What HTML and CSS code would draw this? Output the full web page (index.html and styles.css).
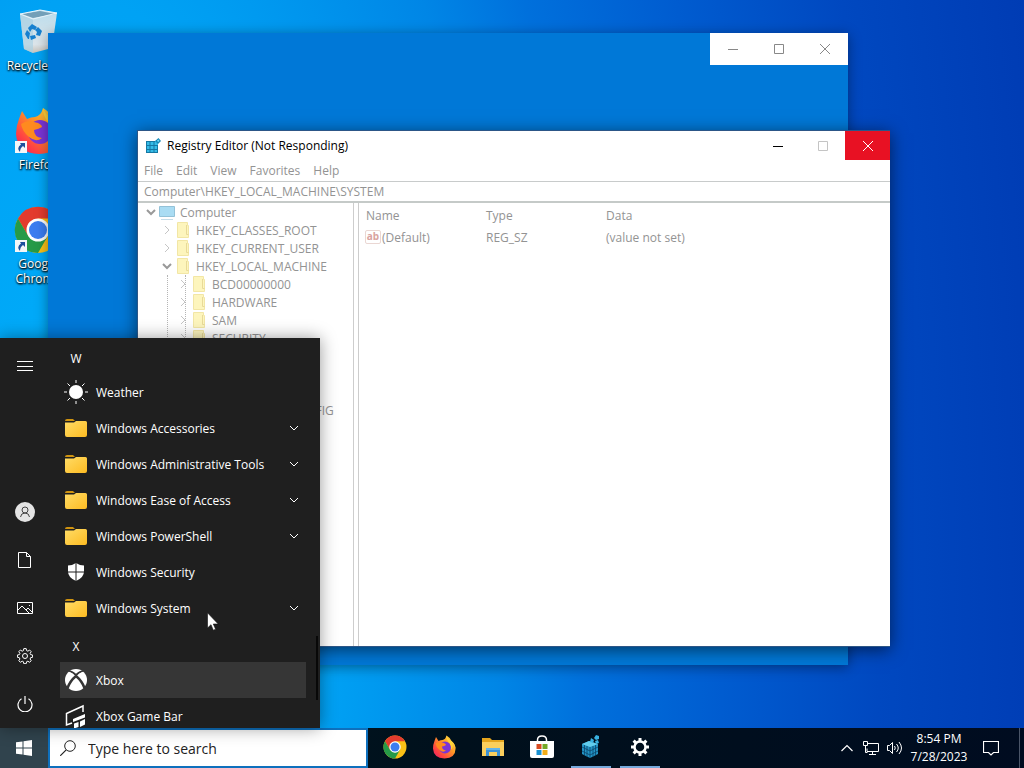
FILE: index.html
```html
<!DOCTYPE html>
<html lang="en">
<head>
    <meta charset="UTF-8">
    <meta name="viewport" content="width=device-width, initial-scale=1.0">
    <title>Desktop</title>
    <link rel="stylesheet" href="styles.css">
</head>
<body>
    <!-- shared icons -->
    <svg class="defs" width="0" height="0" aria-hidden="true">
        <defs>
            <linearGradient id="folder-fill" x1="0" y1="0" x2="1" y2="1">
                <stop offset="0" stop-color="#ffdc66"/>
                <stop offset="1" stop-color="#fdbb22"/>
            </linearGradient>
            <linearGradient id="fox-fill" x1="1" y1="0" x2="0" y2="1">
                <stop offset="0" stop-color="#fff04a"/>
                <stop offset=".4" stop-color="#ff9a25"/>
                <stop offset=".75" stop-color="#ff4143"/>
                <stop offset="1" stop-color="#e5156f"/>
            </linearGradient>
            <linearGradient id="bin-fill" x1="0" y1="0" x2="0" y2="1">
                <stop offset="0" stop-color="#b9dcec"/>
                <stop offset=".8" stop-color="#dde5ea"/>
                <stop offset="1" stop-color="#c8c1b8"/>
            </linearGradient>
            <symbol id="folder" viewBox="0 0 24 24">
                <path d="M1 5q0-2 2-2h6l2 2h-10z" fill="#cf9310"/>
                <path d="M1 6.500l9 0 2-1.500h9.500q1.500 0 1.500 1.500v12.500q0 2-2 2h-18q-2 0-2-2z" fill="url(#folder-fill)"/>
            </symbol>
            <symbol id="chevron" viewBox="0 0 10 10">
                <path d="M1 3l4 4 4-4" fill="none" stroke="currentColor"/>
            </symbol>
            <symbol id="tree-folder" viewBox="0 0 16 18">
                <path d="M2.500 1.500h10v3h1v12h-11z" fill="#fdf5bd" stroke="#f2e6a5"/>
                <path d="M11.500 4v9.500h2" fill="none" stroke="#e8da98"/>
            </symbol>
            <symbol id="minimize" viewBox="0 0 12 12">
                <path d="M1 6.500h10" fill="none" stroke="currentColor"/>
            </symbol>
            <symbol id="maximize" viewBox="0 0 12 12">
                <path d="M1.500 1.500h9v9h-9z" fill="none" stroke="currentColor"/>
            </symbol>
            <symbol id="close" viewBox="0 0 12 12">
                <path d="M1 1l10 10M11 1l-10 10" fill="none" stroke="currentColor"/>
            </symbol>
            <symbol id="chrome" viewBox="0 0 48 48">
                <circle cx="24" cy="24" r="23" fill="#fbc116"/>
                <path d="M4 12.500a23 23 0 0 1 40 0h-20l-10 17z" fill="#e33b2e"/>
                <path d="M4 12.500a23 23 0 0 0 20 34.500l10-17.300-10 5.300-10-5.500z" fill="#269a48"/>
                <circle cx="24" cy="24" r="11.500" fill="#fff"/>
                <circle cx="24" cy="24" r="9" fill="#3b7df0"/>
            </symbol>
            <symbol id="firefox" viewBox="0 0 48 48">
                <path d="M5 12l3-8 5 8q4-2 8-2 6-1 8-9 7 4 10 11 8 6 8 16 0 18-22 19-22-1-23-20 0-8 3-15z" fill="url(#fox-fill)"/>
                <circle cx="26" cy="25" r="12" fill="#7a35d6"/>
                <path d="M7 17q7-5 13-2l4 1q4 2 4 4-3 2-8 3 0 7 8 8-6 5-13-1-7-6-8-13z" fill="#ff8a1f"/>
                <path d="M29 1q0 9 6 15 4 5 3 13 5-5 3-12 6 5 6 12 0-10-8-17-8-4-10-11z" fill="#ffd43a"/>
            </symbol>
            <symbol id="shortcut" viewBox="0 0 12 12">
                <path d="M0 0h12v12h-12z" fill="#f4f6f8"/>
                <path d="M5 2h5v5l-2-2q-3 2-3 6-4-4 1-7.500z" fill="#1d4f9c"/>
            </symbol>
            <symbol id="registry" viewBox="0 0 16 16">
                <path d="M1 3h12v12h-12z" fill="#35bce8"/>
                <path d="M1.500 15v-12M5 3v12M9 3v12M12.500 7v8M1 3.500h9M1 7.500h12M1 11.500h12M1 14.500h12" fill="none" stroke="#1478a4"/>
                <path d="M10 3l3.500-3 2.500 3-3 3z" fill="#1689b8"/>
                <path d="M12 2.500l1.500-1 1 1.500-1.500 1z" fill="#73dcfa"/>
            </symbol>
        </defs>
    </svg>

    <main class="desktop">
        <div class="workspace">
            <nav class="shortcuts" aria-label="Desktop shortcuts">
                <a class="shortcut" href="#">
                    <svg class="shortcut-icon" viewBox="0 0 48 48">
                        <path d="M6 6l20-4 17 3-5 35-19 5-9-4z" fill="url(#bin-fill)"/>
                        <path d="M6 6l13 5v34l-9-4z" fill="#a9cfe2" opacity=".65"/>
                        <path d="M8 6l18-3 15 3-22 4z" fill="#739fb8"/>
                        <path d="M6 6l20-4 17 3-24 6z" fill="none" stroke="#e6f3fa"/>
                        <path d="M14 20l4-4 5 3-2 3-3-1-2 3zM24 19l4 4-2 5-4-1 1-3-2-2zM22 30l-5 2-1-4 5-1zM14 31l-3-5 2-4 3 3-1 6z" fill="#1680cf"/>
                    </svg>
                    <span>Recycle Bin</span>
                </a>
                <a class="shortcut" href="#">
                    <svg class="shortcut-icon" viewBox="0 0 48 48">
                        <use href="#firefox" width="48" height="48"/>
                        <use href="#shortcut" x="1" y="34" width="12" height="12"/>
                    </svg>
                    <span>Firefox</span>
                </a>
                <a class="shortcut" href="#">
                    <svg class="shortcut-icon" viewBox="0 0 48 48">
                        <use href="#chrome" width="48" height="48"/>
                        <use href="#shortcut" x="1" y="34" width="12" height="12"/>
                    </svg>
                    <span>Google Chrome</span>
                </a>
            </nav>

            <section class="window settings-window" aria-label="Settings">
                <div class="settings-controls">
                    <button type="button" aria-label="Minimize"><svg class="glyph"><use href="#minimize"/></svg></button>
                    <button type="button" aria-label="Maximize"><svg class="glyph"><use href="#maximize"/></svg></button>
                    <button type="button" aria-label="Close"><svg class="glyph"><use href="#close"/></svg></button>
                </div>
            </section>

            <section class="window registry-window" aria-label="Registry Editor">
                <header class="titlebar">
                    <svg class="icon-16"><use href="#registry"/></svg>
                    <h1>Registry Editor (Not Responding)</h1>
                    <div class="window-controls">
                        <button type="button" class="minimize" aria-label="Minimize"><svg class="glyph"><use href="#minimize"/></svg></button>
                        <button type="button" class="maximize" aria-label="Maximize"><svg class="glyph"><use href="#maximize"/></svg></button>
                        <button type="button" class="close" aria-label="Close"><svg class="glyph"><use href="#close"/></svg></button>
                    </div>
                </header>
                <div class="menubar">
                    <button type="button">File</button>
                    <button type="button">Edit</button>
                    <button type="button">View</button>
                    <button type="button">Favorites</button>
                    <button type="button">Help</button>
                </div>
                <input class="address" type="text" aria-label="Address" value="Computer\HKEY_LOCAL_MACHINE\SYSTEM">
                <div class="panes">
                    <div class="tree">
                        <div class="node">
                            <svg class="arrow open"><use href="#chevron"/></svg>
                            <svg class="icon-16" viewBox="0 0 16 16">
                                <path d="M.5 2.500h15v10h-15z" fill="#a9dcf3" stroke="#93c2d8"/>
                                <path d="M2 15.500h12" stroke="#c4dce8"/>
                            </svg>
                            <span>Computer</span>
                        </div>
                        <ul>
                            <li><div class="node"><svg class="arrow"><use href="#chevron"/></svg><svg class="tree-folder"><use href="#tree-folder"/></svg><span>HKEY_CLASSES_ROOT</span></div></li>
                            <li><div class="node"><svg class="arrow"><use href="#chevron"/></svg><svg class="tree-folder"><use href="#tree-folder"/></svg><span>HKEY_CURRENT_USER</span></div></li>
                            <li>
                                <div class="node"><svg class="arrow open"><use href="#chevron"/></svg><svg class="tree-folder"><use href="#tree-folder"/></svg><span>HKEY_LOCAL_MACHINE</span></div>
                                <ul class="keys">
                                    <li><div class="node"><svg class="arrow"><use href="#chevron"/></svg><svg class="tree-folder"><use href="#tree-folder"/></svg><span>BCD00000000</span></div></li>
                                    <li><div class="node"><svg class="arrow"><use href="#chevron"/></svg><svg class="tree-folder"><use href="#tree-folder"/></svg><span>HARDWARE</span></div></li>
                                    <li><div class="node"><svg class="arrow"><use href="#chevron"/></svg><svg class="tree-folder"><use href="#tree-folder"/></svg><span>SAM</span></div></li>
                                    <li><div class="node"><svg class="arrow"><use href="#chevron"/></svg><svg class="tree-folder"><use href="#tree-folder"/></svg><span>SECURITY</span></div></li>
                                    <li><div class="node"><svg class="arrow"><use href="#chevron"/></svg><svg class="tree-folder"><use href="#tree-folder"/></svg><span>SOFTWARE</span></div></li>
                                    <li><div class="node"><svg class="arrow"><use href="#chevron"/></svg><svg class="tree-folder"><use href="#tree-folder"/></svg><span>SYSTEM</span></div></li>
                                </ul>
                            </li>
                            <li><div class="node"><svg class="arrow"><use href="#chevron"/></svg><svg class="tree-folder"><use href="#tree-folder"/></svg><span>HKEY_USERS</span></div></li>
                            <li><div class="node"><svg class="arrow"><use href="#chevron"/></svg><svg class="tree-folder"><use href="#tree-folder"/></svg><span>HKEY_CURRENT_CONFIG</span></div></li>
                        </ul>
                    </div>
                    <div class="values">
                        <table>
                            <thead>
                                <tr><th>Name</th><th>Type</th><th>Data</th></tr>
                            </thead>
                            <tbody>
                                <tr>
                                    <td><div class="value-name"><span class="string-icon">ab</span>(Default)</div></td>
                                    <td>REG_SZ</td>
                                    <td>(value not set)</td>
                                </tr>
                            </tbody>
                        </table>
                    </div>
                </div>
            </section>

            <section class="start-menu" aria-label="Start">
                <nav class="rail">
                    <button type="button" class="expand" aria-label="Expand">
                        <svg viewBox="0 0 16 16"><path d="M0 3.500h16M0 8.500h16M0 12.500h16" fill="none" stroke="#fff"/></svg>
                    </button>
                    <button type="button" aria-label="Account">
                        <svg class="account" viewBox="0 0 20 20">
                            <circle cx="10" cy="10" r="10" fill="#e4e4e4"/>
                            <circle cx="10" cy="8" r="3" fill="none" stroke="#444"/>
                            <path d="M5.500 15q.5-4 4.500-4t4.500 4" fill="none" stroke="#444"/>
                        </svg>
                    </button>
                    <button type="button" aria-label="Documents">
                        <svg viewBox="0 0 16 16"><path d="M1.500.5h8l4 4v11h-12zM9.500.5v4h4" fill="none" stroke="#fff"/></svg>
                    </button>
                    <button type="button" aria-label="Pictures">
                        <svg viewBox="0 0 16 16"><path d="M.5 2.500h15v11h-15zM1 10l4-4 7 7M9 10l2-2 4.500 4.500" fill="none" stroke="#fff"/><path d="M12 5h1v1h-1z" fill="#fff"/></svg>
                    </button>
                    <button type="button" aria-label="Settings">
                        <svg viewBox="0 0 16 16">
                            <path d="M6.800.6h2.400l.4 2 1.300.6 1.700-1.200 1.600 1.700-1.100 1.700.5 1.200 2 .4v2.300l-2 .4-.5 1.300 1.100 1.700-1.600 1.600-1.700-1.100-1.300.5-.4 2h-2.400l-.4-2-1.200-.5-1.800 1.100-1.600-1.600 1.100-1.700-.5-1.300-2-.4v-2.300l2-.4.5-1.200-1.100-1.700 1.600-1.700 1.800 1.200 1.200-.6z" fill="none" stroke="#fff"/>
                            <circle cx="8" cy="8" r="2.500" fill="none" stroke="#fff"/>
                        </svg>
                    </button>
                    <button type="button" aria-label="Power">
                        <svg viewBox="0 0 16 16"><path d="M4.500 2.800a7 7 0 1 0 7 0M8 0v8" fill="none" stroke="#fff" stroke-width="1.200"/></svg>
                    </button>
                </nav>
                <div class="apps">
                    <h2>W</h2>
                    <button type="button" class="app">
                        <svg class="app-icon" viewBox="0 0 24 24">
                            <circle cx="12" cy="12" r="7" fill="#fff"/>
                            <path d="M12 0v3M12 21v3M0 12h3M21 12h3M3.500 3.500l2.500 2.500M18 18l2.500 2.500M20.500 3.500l-2.500 2.500M6 18l-2.500 2.500" stroke="#fff"/>
                        </svg>
                        <span>Weather</span>
                    </button>
                    <button type="button" class="app"><svg class="app-icon"><use href="#folder"/></svg><span>Windows Accessories</span><svg class="more"><use href="#chevron"/></svg></button>
                    <button type="button" class="app"><svg class="app-icon"><use href="#folder"/></svg><span>Windows Administrative Tools</span><svg class="more"><use href="#chevron"/></svg></button>
                    <button type="button" class="app"><svg class="app-icon"><use href="#folder"/></svg><span>Windows Ease of Access</span><svg class="more"><use href="#chevron"/></svg></button>
                    <button type="button" class="app"><svg class="app-icon"><use href="#folder"/></svg><span>Windows PowerShell</span><svg class="more"><use href="#chevron"/></svg></button>
                    <button type="button" class="app">
                        <svg class="app-icon" viewBox="0 0 24 24">
                            <path d="M12 3q4 2.500 8 2.500v6q0 6-8 9.500-8-3.500-8-9.500v-6q4 0 8-2.500z" fill="#fff"/>
                            <path d="M12 3v18M4 12h16" stroke="#1f1f1f"/>
                        </svg>
                        <span>Windows Security</span>
                    </button>
                    <button type="button" class="app"><svg class="app-icon"><use href="#folder"/></svg><span>Windows System</span><svg class="more"><use href="#chevron"/></svg></button>
                    <h2>X</h2>
                    <button type="button" class="app selected">
                        <svg class="app-icon" viewBox="0 0 24 24">
                            <circle cx="12" cy="12" r="11" fill="#fff"/>
                            <path d="M4.500 3q3.500 0 7.500 4 4-4 7.500-4" fill="none" stroke="#363636" stroke-width="1.500"/>
                            <path d="M3.500 20q2.500-7 8.500-12 6 5 8.500 12" fill="none" stroke="#363636" stroke-width="2.500"/>
                            <path d="M5.500 3.500q3 1 6.500 5 3.500-4 6.500-5-3-.5-6.500 2.500-3.500-3-6.500-2.500z" fill="#363636"/>
                        </svg>
                        <span>Xbox</span>
                    </button>
                    <button type="button" class="app">
                        <svg class="app-icon" viewBox="0 0 24 24">
                            <path d="M8 19l-5.500 2v-11.500l16.500-7.500v6" fill="none" stroke="#fff" stroke-width="1.500"/>
                            <path d="M9 15l12-5v3.500l-12 4.500zM10 19.500l4.500-1.500v5l-4.500 1.500zM16 17.500l5-2.500v5.500l-5 2.500z" fill="#fff"/>
                        </svg>
                        <span>Xbox Game Bar</span>
                    </button>
                    <div class="scroll-thumb"></div>
                </div>
            </section>

            <svg class="pointer" viewBox="0 0 12 19">
                <path d="M.5.800v15.200l3.500-3.300 2.300 5.500 2.300-1-2.300-5.200h4.900z" fill="#fff" stroke="#111" stroke-width=".6"/>
            </svg>
        </div>

        <footer class="taskbar">
            <button type="button" class="start" aria-label="Start">
                <svg class="icon-16" viewBox="0 0 16 16"><path d="M0 2.300l6.500-.9v6.100h-6.500zM7.500 1.300l8.500-1.200v7.400h-8.500zM0 8.500h6.500v6.100l-6.500-.9zM7.500 8.500h8.500v7.400l-8.500-1.200z" fill="#fff"/></svg>
            </button>
            <label class="search">
                <svg class="icon-16" viewBox="0 0 16 16"><circle cx="10" cy="6" r="5.300" fill="none" stroke="#222"/><path d="M6.200 9.800l-6 6" stroke="#222" stroke-width="1.200"/></svg>
                <input type="text" placeholder="Type here to search" aria-label="Search">
            </label>
            <nav class="pinned">
                <button type="button" aria-label="Google Chrome"><svg class="icon-24"><use href="#chrome"/></svg></button>
                <button type="button" aria-label="Firefox"><svg class="icon-24"><use href="#firefox"/></svg></button>
                <button type="button" aria-label="File Explorer">
                    <svg class="icon-24" viewBox="0 0 24 24">
                        <path d="M1 3h8l2 2h12v5h-22z" fill="#e5a51d"/>
                        <path d="M1 7h22v14h-22z" fill="#fbcf5d"/>
                        <path d="M5 13h14v8h-3v-4h-8v4h-3z" fill="#3c92d5"/>
                        <path d="M5 13h14v2h-14z" fill="#63b4ea"/>
                    </svg>
                </button>
                <button type="button" aria-label="Microsoft Store">
                    <svg class="icon-24" viewBox="0 0 24 24">
                        <path d="M7.500 7v-2q0-4 4.500-4t4.500 4v2" fill="none" stroke="#fff" stroke-width="1.500"/>
                        <path d="M0 6h24v15q0 2-2 2h-20q-2 0-2-2z" fill="#fff"/>
                        <path d="M6.500 9h5v5h-5z" fill="#d84b20"/><path d="M12.500 9h5v5h-5z" fill="#75a928"/>
                        <path d="M6.500 15h5v5h-5z" fill="#1a91d1"/><path d="M12.500 15h5v5h-5z" fill="#f2ac18"/>
                    </svg>
                </button>
                <button type="button" class="running" aria-label="Registry Editor">
                    <svg class="icon-24" viewBox="0 0 24 24">
                        <path d="M3 9l7-3 9 3v10l-8 4-8-4z" fill="#2394c6"/>
                        <path d="M3 9l7-3 9 3-8 3z" fill="#62cdec"/>
                        <path d="M11 12v11M3 12l8 4 8-4M3 16l8 4 8-4M5.500 10v10M8 11v11M14 11v11M16.500 10v10" fill="none" stroke="#0b4468" stroke-width=".8"/>
                        <path d="M12 3l3 2-1 3-3-1zM17 0l3 1v3l-3 1-2-2zM16 6l3-1 1 3-3 1z" fill="#38b1e0"/>
                    </svg>
                </button>
                <button type="button" class="running" aria-label="Settings">
                    <svg class="icon-24" viewBox="0 0 24 24">
                        <circle cx="12" cy="12" r="5.500" fill="none" stroke="#fff" stroke-width="2.500"/>
                        <path d="M12 3v3.500M12 17.500v3.500M3 12h3.500M17.500 12h3.500M5.600 5.600l2.500 2.500M15.900 15.900l2.500 2.500M18.400 5.600l-2.500 2.500M8.100 15.900l-2.500 2.500" stroke="#fff" stroke-width="3"/>
                    </svg>
                </button>
            </nav>
            <div class="tray">
                <button type="button" aria-label="Show hidden icons"><svg class="icon-16" viewBox="0 0 16 16"><path d="M2.500 11l5.500-5.500 5.500 5.500" fill="none" stroke="#fff" stroke-width="1.200"/></svg></button>
                <button type="button" aria-label="Network"><svg class="icon-16" viewBox="0 0 16 16"><path d="M5 3.500h10.500v8h-11.500v-3M9.500 11.500v3M6 14.500h7M.5 1.500h4v4h-4zM2.500 5.500v7h2" fill="none" stroke="#fff"/></svg></button>
                <button type="button" aria-label="Volume"><svg class="icon-16" viewBox="0 0 16 16"><path d="M.5 5.500h2l3-3v11l-3-3h-2zM7.500 6q1.500 2 0 4M9.500 4q3.500 4 0 8M12 2q5 6 0 12" fill="none" stroke="#fff"/></svg></button>
                <div class="clock"><span>8:54 PM</span><span>7/28/2023</span></div>
                <button type="button" class="notifications" aria-label="Notifications"><svg class="icon-16" viewBox="0 0 16 16"><path d="M.5 1.500h15v11h-5l-2.500 2.500-2.500-2.500h-5z" fill="none" stroke="#fff" stroke-width="1.200"/></svg></button>
            </div>
        </footer>
    </main>
</body>
</html>
```

FILE: styles.css
```css
*{
    box-sizing: border-box;
    padding: 0;
    margin: 0;
}
body{
    font-family: "Open Sans", "Noto Sans", sans-serif;
    font-size: 12px;
}
button,input{
    font: inherit;
    color: inherit;
    border: none;
    background: none;
}
button{
    display: flex;
    align-items: center;
    justify-content: center;
}
svg{
    display: block;
    flex-shrink: 0;
}
.defs{
    position: absolute;
}
.icon-16{
    width: 16px;
    height: 16px;
}
.icon-24{
    width: 24px;
    height: 24px;
}
.glyph{
    width: 12px;
    height: 12px;
}
.desktop{
    display: flex;
    flex-direction: column;
    height: 100vh;
    overflow: hidden;
    background: radial-gradient(ellipse 95% 300% at 8% 75%, #00b0fc 0%, #00a2f4 25%, #0086e6 43%, #0070dc 52%, #005cd0 66%, #0048c0 82%, #003cb4 100%);
}
.workspace{
    position: relative;
    flex: 1;
    min-height: 0;
}

/* desktop shortcuts */
.shortcuts{
    width: 76px;
    padding-top: 8px;
    display: flex;
    flex-direction: column;
    gap: 16px;
}
.shortcut{
    display: flex;
    flex-direction: column;
    align-items: center;
    gap: 2px;
    min-height: 83px;
    color: white;
    line-height: 15px;
    text-align: center;
    text-decoration: none;
    text-shadow: 0 1px 2px black, 1px 1px 2px black;
}
.shortcut-icon{
    width: 48px;
    height: 48px;
}

/* windows */
.window{
    position: absolute;
    box-shadow: 0 2px 12px rgba(0,0,0,.4);
}
.settings-window{
    inset: 33px 176px 63px 48px;
    background-color: #0078d7;
}
.settings-controls{
    display: flex;
    width: 138px;
    height: 32px;
    margin-left: auto;
    background-color: white;
    color: #888;
}
.settings-controls button{
    flex: 1;
}
.registry-window{
    inset: 130px 134px 81px 137px;
    display: flex;
    flex-direction: column;
    border: 1px solid #2c5687;
    border-right: none;
    background-color: white;
    color: #939393;
    box-shadow: 0 3px 16px rgba(0,0,0,.55);
}
.titlebar{
    display: flex;
    align-items: center;
    gap: 6px;
    height: 29px;
    padding-left: 7px;
    color: black;
}
.titlebar h1{
    flex: 1;
    font-size: 12px;
    font-weight: normal;
}
.window-controls{
    display: flex;
    height: 100%;
}
.window-controls button{
    width: 45px;
}
.window-controls .maximize{
    color: #c4c4c4;
}
.window-controls .close{
    background-color: #e81123;
    color: white;
}
.menubar{
    display: flex;
    gap: 13px;
    height: 21px;
    padding-left: 6px;
}
.address{
    width: 100%;
    height: 22px;
    padding-left: 6px;
    border-top: 1px solid #c8cbcb;
    border-bottom: 2px solid #c5cac8;
}
.panes{
    display: flex;
    flex: 1;
    min-height: 0;
}
.tree{
    width: 216px;
    padding-left: 5px;
    overflow: hidden;
    border-right: 1px solid #cdcdcd;
}
.tree ul{
    list-style: none;
    padding-left: 16px;
}
.tree .keys{
    position: relative;
}
.tree .keys::before{
    content: "";
    position: absolute;
    top: 0;
    bottom: 0;
    left: 8px;
    width: 17px;
    border: 1px dotted #b5b5b5;
    border-width: 0 1px;
}
.node{
    display: flex;
    align-items: center;
    height: 18px;
    white-space: nowrap;
}
.node span{
    padding-left: 5px;
}
.arrow{
    width: 10px;
    height: 10px;
    margin: 0 3px;
    color: #c5c5c5;
    transform: rotate(-90deg);
}
.arrow.open{
    color: #999;
    stroke-width: 2px;
    transform: none;
}
.tree-folder{
    width: 16px;
    height: 18px;
}
.values{
    flex: 1;
    margin-left: 4px;
    padding-top: 1px;
    border-left: 1px solid #cdcdcd;
}
.values table{
    width: 100%;
    table-layout: fixed;
    border-collapse: collapse;
}
.values th,.values td{
    width: 120px;
    height: 22px;
    padding-left: 7px;
    font-weight: normal;
    text-align: left;
    white-space: nowrap;
}
.values th:last-child,.values td:last-child{
    width: auto;
}
.value-name{
    display: flex;
    align-items: center;
    gap: 1px;
    margin-left: -1px;
}
.string-icon{
    width: 16px;
    height: 14px;
    border: 1px solid #ead7d3;
    border-radius: 2px;
    color: #d9a39f;
    font-size: 10px;
    font-weight: bold;
    line-height: 11px;
    text-align: center;
}

/* start menu */
.start-menu{
    position: absolute;
    left: 0;
    bottom: 0;
    display: flex;
    width: 320px;
    height: 390px;
    overflow: hidden;
    background-color: #1f1f1f;
    color: white;
    box-shadow: 0 0 16px rgba(0,0,0,.4);
}
.rail{
    display: flex;
    flex-direction: column;
    width: 50px;
    padding-top: 4px;
}
.rail button{
    height: 48px;
}
.rail .expand{
    margin-bottom: auto;
}
.rail svg{
    width: 16px;
    height: 16px;
}
.rail .account{
    width: 20px;
    height: 20px;
}
.apps{
    position: relative;
    flex: 1;
    padding: 0 14px 0 10px;
}
.apps h2{
    height: 36px;
    padding: 4px 0 0 4px;
    width: 28px;
    font-size: 12px;
    font-weight: normal;
    line-height: 34px;
    text-align: center;
}
.app{
    width: 100%;
    height: 36px;
    padding: 0 7px 0 4px;
    gap: 8px;
}
.app span{
    flex: 1;
    text-align: left;
    white-space: nowrap;
}
.app.selected{
    background-color: #363636;
}
.app-icon{
    width: 24px;
    height: 24px;
}
.more{
    width: 10px;
    height: 10px;
}
.scroll-thumb{
    position: absolute;
    right: 2px;
    bottom: 28px;
    width: 2px;
    height: 64px;
    background-color: #080808;
}
.pointer{
    position: absolute;
    left: 207px;
    bottom: 97px;
    width: 12px;
    height: 19px;
}

/* taskbar */
.taskbar{
    display: flex;
    height: 40px;
    background: linear-gradient(90deg, #001a24, #00101c 45%, #000c20);
    color: white;
}
.start{
    width: 48px;
    background-color: #30434d;
}
.search{
    display: flex;
    align-items: center;
    gap: 12px;
    width: 320px;
    padding-left: 10px;
    border: 2px solid #0e70bd;
    background-color: white;
    color: #222;
}
.search input{
    flex: 1;
    min-width: 0;
    outline: none;
    font-size: 14px;
}
.search input::placeholder{
    color: #222;
    opacity: 1;
}
.pinned{
    display: flex;
    gap: 1px;
    margin-left: 3px;
}
.pinned button{
    width: 48px;
    border-bottom: 2px solid transparent;
}
.pinned .running{
    width: 40px;
    margin: 0 4px;
    border-bottom-color: #76a9dc;
}
.tray{
    display: flex;
    margin: 0 4px 0 auto;
    border-right: 1px solid #4a5568;
}
.tray button{
    width: 24px;
}
.clock{
    display: flex;
    flex-direction: column;
    justify-content: center;
    width: 64px;
    line-height: 18px;
    text-align: center;
}
.tray .notifications{
    width: 40px;
    margin-right: 8px;
}
```
